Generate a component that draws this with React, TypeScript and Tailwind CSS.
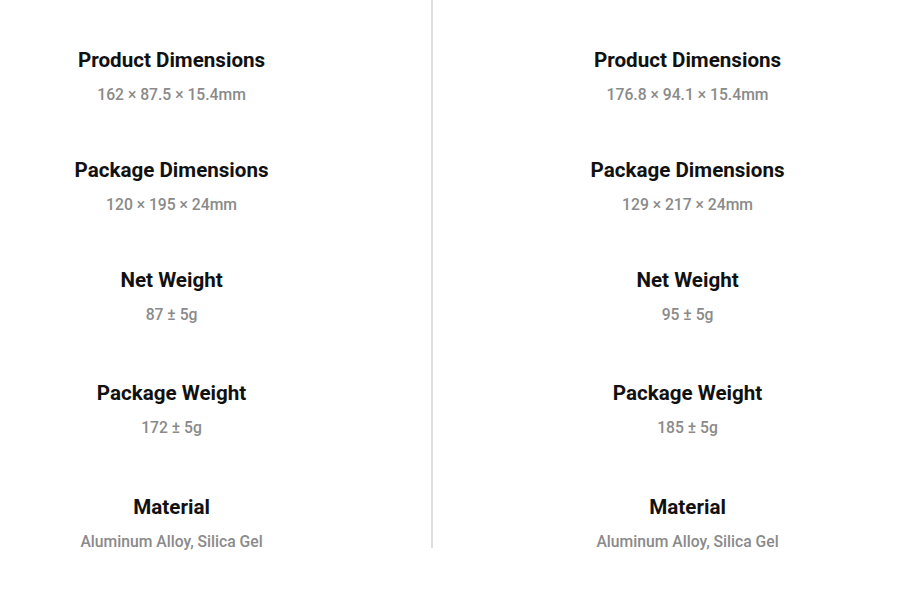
const left = [
  { title: "Product Dimensions", value: "162 × 87.5 × 15.4mm", gap: "mt-0" },
  { title: "Package Dimensions", value: "120 × 195 × 24mm", gap: "mt-[53px]" },
  { title: "Net Weight", value: "87 ± 5g", gap: "mt-[53px]" },
  { title: "Package Weight", value: "172 ± 5g", gap: "mt-[56px]" },
  { title: "Material", value: "Aluminum Alloy, Silica Gel", gap: "mt-[57px]" },
];

const right = [
  { title: "Product Dimensions", value: "176.8 × 94.1 × 15.4mm", gap: "mt-0" },
  { title: "Package Dimensions", value: "129 × 217 × 24mm", gap: "mt-[53px]" },
  { title: "Net Weight", value: "95 ± 5g", gap: "mt-[53px]" },
  { title: "Package Weight", value: "185 ± 5g", gap: "mt-[56px]" },
  { title: "Material", value: "Aluminum Alloy, Silica Gel", gap: "mt-[57px]" },
];

type Spec = { title: string; value: string; gap: string };

function SpecColumn({ specs, className }: { specs: Spec[]; className: string }) {
  return (
    <div className={`flex flex-col items-center pt-[48px] ${className}`}>
      {specs.map((s) => (
        <div key={s.title} className={`flex flex-col items-center ${s.gap}`}>
          <h2 className="text-[20.6px] leading-[24px] font-bold text-[#111]">{s.title}</h2>
          <p className="mt-[12px] text-[15.7px] leading-[21px] font-medium text-[#8a8a8a]">{s.value}</p>
        </div>
      ))}
    </div>
  );
}

export default function App() {
  return (
    <main
      className="flex h-[600px] w-[900px] bg-white"
      style={{ fontFamily: "Roboto, 'Liberation Sans', sans-serif" }}
    >
      <SpecColumn specs={left} className="w-[344px]" />
      <div className="ml-[88px] h-[548px] w-[2px] bg-[#dedede]" />
      <SpecColumn specs={right} className="ml-[42px] w-[426px]" />
    </main>
  );
}
